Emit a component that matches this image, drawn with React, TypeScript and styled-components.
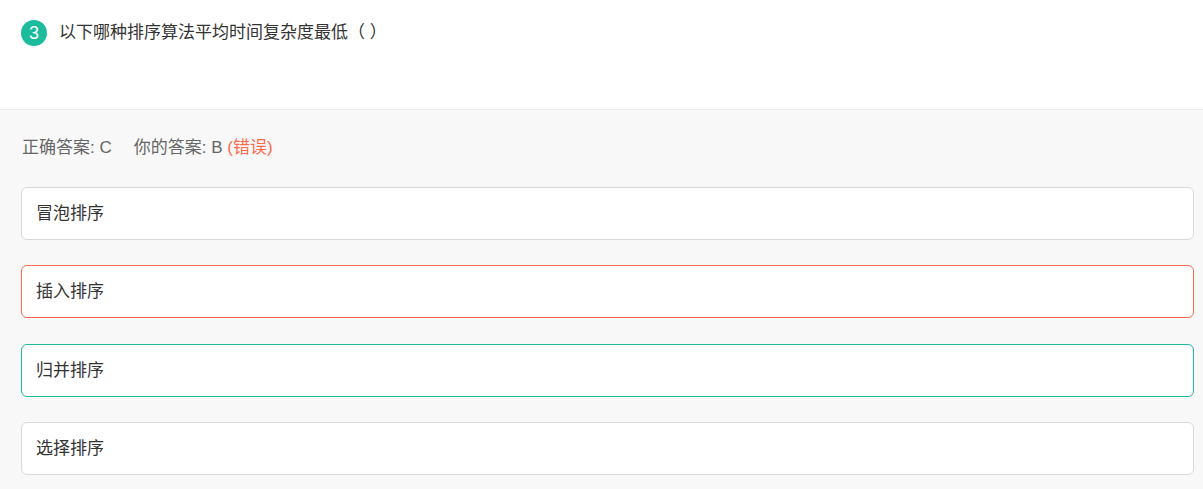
import React from "react";
import styled, { createGlobalStyle } from "styled-components";

const Global = createGlobalStyle`
  html, body { margin: 0; padding: 0; background: #f8f8f8; }
  body { font-family: "Liberation Sans", "Noto Sans CJK SC", sans-serif; }
`;

const Page = styled.div`
  width: 1203px;
  min-height: 489px;
  background: #f8f8f8;
`;

const QuestionBar = styled.div`
  height: 110px;
  box-sizing: border-box;
  background: #fff;
  border-bottom: 1px solid #ececec;
  display: flex;
  align-items: flex-start;
  gap: 12px;
  padding: 20px 0 0 21px;
`;

const Badge = styled.span`
  width: 26px;
  height: 26px;
  border-radius: 50%;
  background: #1abc9c;
  color: #fff;
  font-size: 18px;
  line-height: 26px;
  text-align: center;
  flex-shrink: 0;
`;

const QuestionText = styled.div`
  font-size: 17px;
  line-height: 26px;
  color: #333;
`;

const Body = styled.div`
  padding: 26px 9px 14px 21px;
  display: flex;
  flex-direction: column;
`;

const AnswerLine = styled.div`
  font-size: 17px;
  line-height: 24px;
  color: #666;
  margin-bottom: 27px;
  padding-left: 1px;
`;

const YourAnswer = styled.span`
  margin-left: 22px;
`;

const Wrong = styled.span`
  color: #ff6a4c;
`;

const OptionList = styled.div`
  display: flex;
  flex-direction: column;
  gap: 25.33px;
`;

type Status = "normal" | "wrong" | "right";

const borderColors: Record<Status, string> = {
  normal: "#d9d9d9",
  wrong: "#ff6a4c",
  right: "#1abc9c",
};

const Option = styled.div<{ $status: Status }>`
  background: #fff;
  border: 1px solid ${(p) => borderColors[p.$status]};
  border-radius: 6px;
  padding: 15px 14px;
  font-size: 17px;
  line-height: 21px;
  color: #333;
`;

const options: { text: string; status: Status }[] = [
  { text: "冒泡排序", status: "normal" },
  { text: "插入排序", status: "wrong" },
  { text: "归并排序", status: "right" },
  { text: "选择排序", status: "normal" },
];

export default function App() {
  return (
    <Page>
      <Global />
      <QuestionBar>
        <Badge>3</Badge>
        <QuestionText>以下哪种排序算法平均时间复杂度最低（ ）</QuestionText>
      </QuestionBar>
      <Body>
        <AnswerLine>
          正确答案: C<YourAnswer>你的答案: B</YourAnswer> <Wrong>(错误)</Wrong>
        </AnswerLine>
        <OptionList>
          {options.map((o) => (
            <Option key={o.text} $status={o.status}>
              {o.text}
            </Option>
          ))}
        </OptionList>
      </Body>
    </Page>
  );
}
